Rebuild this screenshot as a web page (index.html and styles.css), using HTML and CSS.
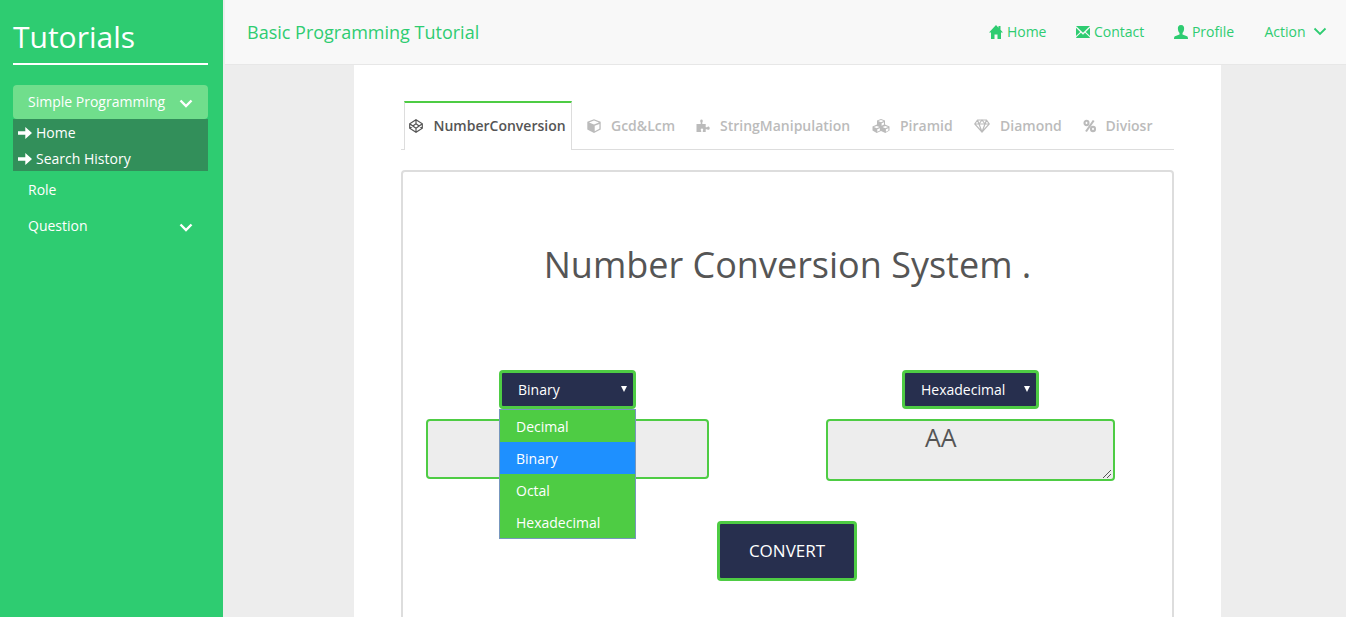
FILE: index.html
```html
<!DOCTYPE html>
<html lang="en">
<head>
<meta charset="utf-8">
<title>Basic Programming Tutorial</title>
<link rel="stylesheet" href="styles.css">
</head>
<body>
<div class="app">
  <aside class="sidebar">
    <h1 class="brand">Tutorials</h1>
    <a class="side-item active"><span>Simple Programming</span><svg class="chev" viewBox="0 0 14 9"><path d="M1.500 1.500 7 7l5.500-5.500"/></svg></a>
    <div class="submenu">
      <a><svg class="arrow" viewBox="0 0 14 12"><path d="M0 4.300h7.300V0L14 6l-6.700 6V7.700H0z"/></svg>Home</a>
      <a><svg class="arrow" viewBox="0 0 14 12"><path d="M0 4.300h7.300V0L14 6l-6.700 6V7.700H0z"/></svg>Search History</a>
    </div>
    <a class="side-item role"><span>Role</span></a>
    <a class="side-item"><span>Question</span><svg class="chev" viewBox="0 0 14 9"><path d="M1.500 1.500 7 7l5.500-5.500"/></svg></a>
  </aside>
  <div class="main">
    <nav class="topbar">
      <span class="site">Basic Programming Tutorial</span>
      <div class="links">
        <a class="l-home"><svg viewBox="0 0 14 14"><path d="M7 0 0 7.500h2V14h3.500V9.500h3V14H12V7.500h2L11.500 4.800V1h-2v1.700z"/></svg>Home</a>
        <a class="l-contact"><svg viewBox="0 0 14 14"><path d="M0 1h14L7 7.800zM0 2.800 4.200 7 0 11zM14 2.800 9.800 7l4.200 4zM5 7.700l2 2 2-2 4.800 4.500V13H.2v-.8z"/></svg>Contact</a>
        <a class="l-profile"><svg viewBox="0 0 14 14"><path d="M7 0C4.500 0 3.700 1.700 3.900 4c.1 1.900.9 3.200 1.600 4v1.500L1 11.300C.3 11.600 0 12.500 0 14h14c0-1.500-.3-2.400-1-2.700L8.500 9.500V8c.7-.8 1.500-2.100 1.600-4C10.300 1.700 9.500 0 7 0z"/></svg>Profile</a>
        <a class="l-action">Action<svg class="chev thin" viewBox="0 0 14 9"><path d="M1.500 1.500 7 7l5.500-5.500"/></svg></a>
      </div>
    </nav>
    <main class="page">
      <div class="tabs">
        <a class="tab t1"><svg viewBox="0 0 14 14"><path class="line" d="M7 .7 13.300 4.800v4.400L7 13.300.7 9.200V4.800zM7 .7v4M7 9.300v4M.7 4.800 7 9.300l6.300-4.500M.7 9.200 7 4.700l6.300 4.500"/></svg><span>NumberConversion</span></a>
        <a class="tab t2"><svg viewBox="0 0 14 14"><path fill-rule="evenodd" d="M7 .3 13.700 2.800v7.700L7 13.900.3 10.500V2.800zM7 1.600 2 3.500l5 1.900 5-1.900zM7.700 6.700v5.500l4.700-2.400V4.900z"/></svg><span>Gcd&amp;Lcm</span></a>
        <a class="tab t3"><svg viewBox="0 0 14 14"><path d="M.5 5h4.200V3.500C3.800 2.700 4 .6 5.500.6s1.700 2.100.8 2.900V5h3.400v3.200h1.400c.8-1.100 2.600-.7 2.600 1s-1.800 2.100-2.600 1.100H9.700V13H6.800v-1.200c.8-.9.500-2.300-.8-2.300s-1.700 1.400-.8 2.300V13H.5z"/></svg><span>StringManipulation</span></a>
        <a class="tab t4"><svg viewBox="0 0 18 14"><path fill-rule="evenodd" d="M9 0l4 1.600v4l4.500 2v4L13.300 14 9 12l-4.300 2L.5 11.600v-4L5 5.600v-4zM6.200 2.100 9 3.200l2.800-1.100L9 1zM9.600 4.200v2.500L12 5.500V3.200zM1.900 8l2.800 1.200L7.500 8 4.700 6.900zM5.300 10.300v2.400l2.600-1.200V9.200zM10.500 8l2.800 1.200L16.100 8l-2.800-1.100zM13.900 10.300v2.400l2.500-1.200V9.200z"/></svg><span>Piramid</span></a>
        <a class="tab t5"><svg viewBox="0 0 16 14"><path class="line" d="M3.500 1h9L15.300 5 8 13 .7 5zM.7 5h14.600M3.500 1 5 5l3 8 3-8 1.500-4M5 5l3-4 3 4"/></svg><span>Diamond</span></a>
        <a class="tab t6"><svg viewBox="0 0 14 14"><path class="pct" d="M10.700 1.500 3 12.500"/><ellipse class="pct" cx="3.500" cy="4" rx="2" ry="2.200"/><ellipse class="pct" cx="10" cy="10" rx="2" ry="2.200"/></svg><span>Diviosr</span></a>
      </div>
      <section class="panel">
        <h2>Number Conversion System .</h2>
        <div class="fields">
          <div class="field source">
            <div class="select">Binary<i></i>
              <div class="options"><div>Decimal</div><div class="chosen">Binary</div><div>Octal</div><div>Hexadecimal</div></div>
            </div>
            <div class="box"></div>
          </div>
          <div class="field result">
            <div class="select">Hexadecimal<i></i></div>
            <div class="box">AA<svg viewBox="0 0 10 10"><path d="M1 9 9 1M5 9l4-4"/></svg></div>
          </div>
        </div>
        <button class="convert">CONVERT</button>
      </section>
    </main>
  </div>
</div>
</body>
</html>
```
FILE: styles.css
```css
* { box-sizing: border-box; }
body { margin: 0; background: #ededed; font: 14px/20px "Open Sans", sans-serif; color: #555; overflow: hidden; }
svg { display: block; flex: none; fill: currentColor; }
.app { display: flex; height: 617px; overflow: hidden; }
.sidebar { width: 223px; flex: none; padding: 10px 15px 0 13px; background: #2ecc71; color: #fff; }
.brand { margin: 0 0 20px; height: 55px; border-bottom: 2px solid #fff; font-size: 30px; font-weight: 400; line-height: 54px; }
.side-item { display: flex; align-items: center; justify-content: space-between; height: 36px; padding: 0 15px; }
.side-item.active { height: 34px; background: #70de8c; border-radius: 4px; }
.side-item.role { margin-top: 1px; }
.chev { width: 14px; height: 9px; fill: none; stroke: currentColor; stroke-width: 2.4; margin-top: 3px; }
.chev.thin { stroke-width: 1.8; margin: 0 0 0 4px; }
.submenu { height: 52px; background: #328f5a; }
.submenu a { display: flex; align-items: center; height: 26px; padding: 1px 0 0 5px; gap: 4px; }
.arrow { width: 14px; height: 12px; }
.main { flex: 1; min-width: 0; padding-left: 2px; display: flex; flex-direction: column; }
.topbar { display: flex; justify-content: space-between; height: 65px; flex: none; padding: 0 19px 0 22px; background: #f8f8f8; border-bottom: 1px solid #e7e7e7; color: #2ecc71; }
.site { font-size: 18px; line-height: 64px; }
.links { display: flex; align-items: center; height: 63px; }
.links a { display: flex; align-items: center; gap: 3.500px; }
.links svg { width: 14px; height: 14px; }
.links .chev { height: 9px; }
.l-home { width: 87px; }
.l-contact { width: 98px; }
.l-profile { width: 90px; }
.page { width: 867px; margin-left: 129px; flex: 1; background: #fff; padding: 36px 47px 0; }
.tabs { display: flex; height: 49px; padding-left: 3px; box-shadow: inset 0 -1px #ddd; color: #bbb; font-weight: 600; }
.tab { display: flex; align-items: center; height: 49px; white-space: nowrap; }
.tab svg { width: 14px; height: 14px; }
.tab .line { fill: none; stroke: currentColor; stroke-width: 1.2; }
.tab .pct { fill: none; stroke: currentColor; stroke-width: 2.1; }
.t1 { width: 168px; padding: 0 0 2px 4px; gap: 10.500px; background: #fff; color: #555; border: 1px solid #ddd; border-width: 2px 1px 0; border-top-color: #4ecc44; }
.t2 { width: 124px; padding-left: 15px; gap: 10px; }
.t3 { width: 176px; gap: 10px; }
.t4 { width: 102px; gap: 10px; }
.t4 svg { width: 18px; }
.t5 { width: 109px; gap: 10px; }
.t5 svg { width: 16px; }
.t6 { gap: 8.500px; }
.panel { height: 600px; margin-top: 20px; padding: 67px 23px 0; border: 2px solid #ddd; border-radius: 4px; display: flex; flex-direction: column; align-items: center; }
h2 { margin: 0; font-size: 36px; font-weight: 400; line-height: 52px; white-space: nowrap; }
.fields { align-self: stretch; margin-top: 79px; display: flex; gap: 117px; }
.field { display: flex; flex-direction: column; align-items: center; gap: 10px; }
.source { width: 283px; }
.result { width: 289px; }
.select { position: relative; width: 137px; height: 39px; padding: 0 16px; line-height: 33px; color: #fff; background: #272f4e; border: 3px solid #4ecc44; border-radius: 4px; }
.select i { position: absolute; right: 6px; top: 13px; border: 3px solid transparent; border-top: 6px solid #fff; border-bottom: 0; }
.options { position: absolute; z-index: 2; left: -3px; top: 36px; width: 137px; height: 130px; background: #4ecc44; border: 1px solid #7797bd; }
.options div { height: 32px; line-height: 34px; padding-left: 16px; }
.options .chosen { background: #1e90ff; }
.box { position: relative; width: 100%; border: 2px solid #4ecc44; border-radius: 4px; background: #ededed; }
.source .box { height: 60px; }
.result .box { height: 62px; padding-left: 97px; font-size: 25px; line-height: 33px; }
.box svg { position: absolute; right: 1px; bottom: 0; width: 10px; height: 10px; fill: none; stroke: #555; stroke-width: 1; }
.convert { width: 140px; height: 60px; margin: 40px 2px 0 0; padding: 0 0 2px 1px; background: #272f4e; color: #fff; border: 3px solid #4ecc44; border-radius: 4px; font: 17px "Open Sans", sans-serif; }
```
